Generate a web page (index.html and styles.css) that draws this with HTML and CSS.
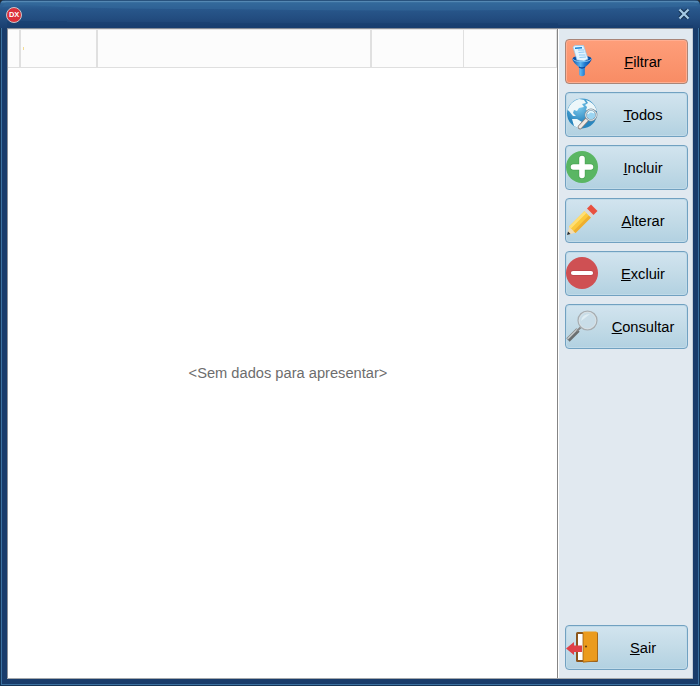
FILE: index.html
```html
<!DOCTYPE html>
<html lang="pt-BR">
<head>
<meta charset="utf-8">
<title>Cadastro</title>
<link rel="stylesheet" href="styles.css">
</head>
<body>
<div class="window">
  <header class="titlebar">
    <svg class="titlebar-shade" width="700" height="28" viewBox="0 0 700 28"><path d="M6 2H694L698 6Q500 13 205 9Q90 9 25 5L2 7Z" fill="#34699b" opacity=".6"/><path d="M7 21H67V22H210V23H558V25H693V28H7Z" fill="#173c6d" opacity=".45"/></svg>
    <span class="logo">DX</span>
    <button class="close" aria-label="Fechar"><svg width="12" height="12" viewBox="0 0 12 12"><path d="M2 2L10 10M10 2L2 10" stroke="#173352" stroke-width="4.5"/><path d="M1.5 1.5L10.5 10.5M10.5 1.5L1.5 10.5" stroke="#a6cbe5" stroke-width="2.2"/></svg></button>
  </header>
  <main class="content">
    <section class="grid">
      <div class="grid-head"><span class="col c1"></span><span class="col c2"><i class="mark"></i></span><span class="col c3"></span><span class="col c4"></span><span class="col c5"></span></div>
      <div class="grid-body">&lt;Sem dados para apresentar&gt;</div>
    </section>
    <nav class="actions">
      <button class="action active">
        <svg class="icon" viewBox="0 0 32 32"><defs><linearGradient id="fun"><stop stop-color="#0b50a8"/><stop offset=".42" stop-color="#5bb4ef"/><stop offset=".65" stop-color="#1f78cf"/><stop offset="1" stop-color="#07439c"/></linearGradient></defs><ellipse cx="16" cy="13.5" rx="9.5" ry="2.8" fill="#0a4fa5"/><path d="M7 2L9 .5H17.5L22 14L18 16L11 15Z" fill="#e4f4ff" stroke="#8ecaf0" stroke-width=".7"/><path d="M12 5H18M12.5 7.5L18.5 7M13 10H19.5M13.5 12.5L20 12" stroke="#8cc8f3" stroke-width="1.2"/><path d="M9 3.2L16 2.8" stroke="#1683d5" stroke-width="1.6"/><path d="M6.3 13.5Q8 16.5 16 16.5Q24 16.5 25.7 13.5Q25.5 17 18.8 22.5V30Q16 32.5 13.2 30V22.5Q6.5 17 6.3 13.5Z" fill="url(#fun)"/><path d="M6.5 13.8Q8.5 16.7 16 16.7Q23.5 16.7 25.5 13.8" fill="none" stroke="#79c5f6"/><path d="M13 22Q16 24 19 22" fill="none" stroke="#07449a" stroke-width="1.3"/></svg>
        <span class="label"><u>F</u>iltrar</span></button>
      <button class="action">
        <svg class="icon" viewBox="0 0 32 32"><defs><radialGradient id="sea" cx=".4" cy=".3"><stop stop-color="#7ccaee"/><stop offset="1" stop-color="#2a86be"/></radialGradient></defs><circle cx="16" cy="15.5" r="15" fill="url(#sea)"/><path d="M1.5 12Q5 3 13 1L18 2L20 5L16 6L18 9L13 10L11 13L8 12L7 15L10 18L7 18L3 13ZM6 21L11 21L16 24L12 30L8 28ZM20 2Q28 4 31 13L27 12L24 14L20 12L21 9L19 7L22 5Z" fill="#edf7fa"/><path d="M20.5 22L14 29" stroke="#877d7a" stroke-width="4.5" stroke-linecap="round"/><path d="M20.5 22L14 29" stroke="#efe8e3" stroke-width="3" stroke-linecap="round"/><circle cx="25" cy="17" r="5.4" fill="#9bd4f1" stroke="#7d8d99" stroke-width="2"/><circle cx="25" cy="17" r="5.3" fill="none" stroke="#e4edf1"/><path d="M22 16Q24 12 28 15" fill="none" stroke="#e9faff" stroke-width="1.5"/></svg>
        <span class="label"><u>T</u>odos</span></button>
      <button class="action">
        <svg class="icon" viewBox="0 0 32 32"><circle cx="16" cy="16" r="16" fill="#5ab663"/><path d="M16 7.5V24.5M7.5 16H24.5" stroke="#4aa454" stroke-width="7" stroke-linecap="round"/><path d="M16 7.5V24.5M7.5 16H24.5" stroke="#fff" stroke-width="5.6" stroke-linecap="round"/></svg>
        <span class="label"><u>I</u>ncluir</span></button>
      <button class="action">
        <svg class="icon" viewBox="0 0 32 32"><path d="M1 31L3.5 22L10 28.5Z" fill="#f1dcb4"/><path d="M1 31L2 27.5L4.5 30Z" fill="#222c36"/><path d="M3 22.5L18.5 7L25 13.5L9.5 29Z" fill="#fbc93c"/><path d="M3 22.5L18.5 7L20.5 9L5 24.5Z" fill="#ffdf74"/><path d="M7.5 27L23 11.5L25 13.5L9.5 29Z" fill="#edae30"/><path d="M18.5 7L21.5 4L28 10.5L25 13.5Z" fill="#d8d9da"/><path d="M21 4.5L25 .5L31.5 7L27.5 11Z" fill="#e8503f"/></svg>
        <span class="label"><u>A</u>lterar</span></button>
      <button class="action">
        <svg class="icon" viewBox="0 0 32 32"><circle cx="16" cy="16" r="16" fill="#cf5053"/><path d="M7 16H25" stroke="#b94349" stroke-width="5.4" stroke-linecap="round"/><path d="M7 16H25" stroke="#fff" stroke-width="4.2" stroke-linecap="round"/></svg>
        <span class="label"><u>E</u>xcluir</span></button>
      <button class="action">
        <svg class="icon" viewBox="0 0 32 32"><path d="M2 30L12 20" stroke="#6a6e6f" stroke-width="4.6"/><path d="M1.5 28.8L11.5 18.8" stroke="#c0c5c6" stroke-width="1.8"/><path d="M11 21L15 17" stroke="#888" stroke-width="2"/><circle cx="21.5" cy="10.5" r="9.3" fill="#c9dde8" stroke="#a7adb1" stroke-width="1.6"/><circle cx="21.5" cy="10.5" r="8.4" fill="none" stroke="#e1e7ea" stroke-width=".8"/><path d="M15 11Q16 4 24 4Q19 8 15 11Z" fill="#e0eef4"/></svg>
        <span class="label"><u>C</u>onsultar</span></button>
      <button class="action exit">
        <svg class="icon" viewBox="0 0 32 32"><rect x="10" y="1" width="22" height="30" rx="1.5" fill="#8b561b"/><rect x="12" y="3" width="9" height="26" fill="#fff"/><path d="M17 2Q16 .5 18 .5H30Q31.3 .5 31.3 2V30L17 31.5Z" fill="#eb9b1e"/><path d="M17 2V31L31.5 30" fill="none" stroke="#9a6119" stroke-width=".8"/><circle cx="20" cy="15.5" r="1.1" fill="#653d14"/><path d="M0 17.5L8 11V14.5H16V21H8V24Z" fill="#df4047"/></svg>
        <span class="label"><u>S</u>air</span></button>
    </nav>
  </main>
</div>
</body>
</html>
```
FILE: styles.css
```css
* { box-sizing: border-box; }
body { margin: 0; background: #252d35; font: 15px "Liberation Sans", Arial, sans-serif; }
button { font: inherit; color: #000; padding: 0; }
.window {
  height: 686px; display: flex; flex-direction: column; overflow: hidden;
  border-radius: 5px 5px 0 0; background: #193c6b;
  box-shadow: inset 0 0 0 1px #153456, inset 0 0 0 2px #3c71a0;
}
.titlebar {
  position: relative; flex: 0 0 28px; display: flex; justify-content: space-between; align-items: center;
  padding: 0 10px 0 6px; border-radius: 5px 5px 0 0;
  background: linear-gradient(#28527d 0 1px, #5488b3 1px 2px, #32689a 3px, #28578b 9px, #234d80 18px, #1a3f70 28px);
}
.titlebar-shade { position: absolute; left: 0; top: 0; }
.logo {
  position: relative; width: 16px; height: 16px; margin-top: 2px; border-radius: 50%;
  border: 1px solid #c8c6cb; background: #dc3039; color: #fff;
  font-size: 7.5px; font-weight: bold; line-height: 14px; text-align: center; letter-spacing: -.3px;
}
.close { position: relative; width: 12px; height: 12px; border: 0; background: none; }
.close svg { display: block; }
.content { display: flex; height: 651px; margin: 0 7px; border-top: 1px solid #858b96; border-bottom: 1px solid #a4a8ab; }
.grid { flex: 0 0 551px; border-left: 1px solid #8a8f98; border-right: 1px solid #858585; background: #fff; display: flex; flex-direction: column; }
.grid-head { display: flex; height: 39px; background: #fcfcfc; border-top: 1px solid #e4e4e4; border-bottom: 1px solid #dfdfdf; }
.col { border-right: 2px solid #e0e0e0; }
.c1 { width: 13px; }
.c2 { width: 77px; padding: 17px 0 0 2px; }
.c3 { width: 274px; }
.c4 { width: 92px; border-right-width: 1px; }
.c5 { flex: 1; border-right: 1px solid #e0e0e0; }
.mark { display: block; width: 1px; height: 3px; background: #f3dc94; }
.grid-body { flex: 1; display: flex; align-items: center; justify-content: center; padding-left: 11px; color: #6d6d6d; font-size: 14.67px; }
.actions { flex: 1; display: flex; flex-direction: column; gap: 8px; padding: 10px 4px 8px 6px; border-left: 1px solid #fff; border-right: 1px solid #c3ccd7; background: #e1e9f0; }
.action {
  flex: 0 0 45px; width: 123px; display: flex; align-items: flex-start;
  border: 1px solid #71a1c1; border-radius: 4px; box-shadow: inset 0 0 0 1px #c0dae8;
  background: linear-gradient(#d2e4ef, #c3dbe7 50%, #b2d1e1);
}
.active { border-color: #a98578; box-shadow: inset 0 0 0 1px #ffae91; background: linear-gradient(#fe9e7a, #f88c64); }
.exit { margin-top: auto; }
.icon { flex: none; width: 32px; height: 32px; margin-top: 5px; }
.label { flex: 1; line-height: 41px; padding: 2px 0 0 1px; text-align: center; font-size: 14.67px; }
```
